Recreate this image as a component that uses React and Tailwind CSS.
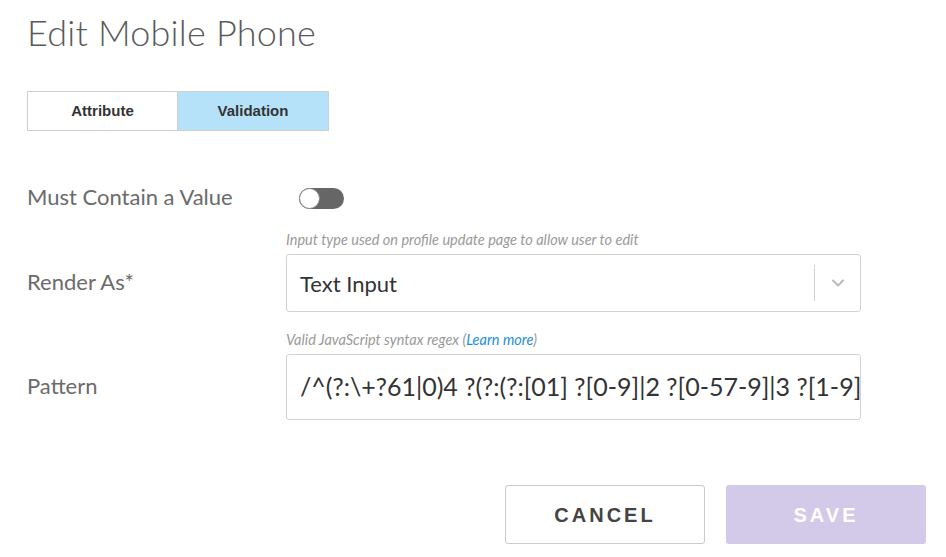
import { ChevronDown } from 'lucide-react';

export default function App() {
  return (
    <div className="w-[946px] h-[557px] bg-white pl-[27px] pt-[10px] font-['Lato',sans-serif] text-[#555]">
      <h1 className="text-[36px] font-light leading-[44px] text-[#5a5a5a] tracking-[0.2px]">Edit Mobile Phone</h1>

      <div className="mt-[37px] flex w-[302px] h-[40px] border border-[#cfcfcf] font-['Liberation_Sans',Arial,sans-serif] font-bold text-[15px] text-[#333]">
        <button className="w-[150px] h-full bg-white border-r border-[#cfcfcf]">Attribute</button>
        <button className="flex-1 h-full bg-[#b5e1f9]">Validation</button>
      </div>

      <div className="mt-[53px] flex items-center h-[24px]">
        <div className="w-[272px] text-[22px] text-[#6b6b6b]">Must Contain a Value</div>
        <div className="relative w-[45px] h-[21px] mt-[4px] rounded-full bg-[#666]">
          <div className="absolute left-0 top-0 w-[21px] h-[21px] rounded-full bg-white border border-[#888]"></div>
        </div>
      </div>

      <div className="mt-[23px] flex">
        <div className="w-[259px] shrink-0 flex items-end pb-[14px] text-[22px] text-[#6b6b6b]">Render As*</div>
        <div className="w-[575px]">
          <div className="text-[14.5px] italic text-[#9a9a9a] leading-[18px] mb-[5px]">
            Input type used on profile update page to allow user to edit
          </div>
          <div className="flex items-center h-[58px] border border-[#d2d2d2] rounded-[3px]">
            <div className="flex-1 pl-[13px] text-[22px] text-[#333]">Text Input</div>
            <div className="w-px h-[36px] bg-[#d2d2d2]"></div>
            <div className="w-[45px] flex justify-center text-[#bbb]">
              <ChevronDown size={20} strokeWidth={2.5} />
            </div>
          </div>
        </div>
      </div>

      <div className="mt-[19px] flex">
        <div className="w-[259px] shrink-0 flex items-end pb-[18px] text-[22px] text-[#6b6b6b]">Pattern</div>
        <div className="w-[575px]">
          <div className="text-[14.5px] italic text-[#9a9a9a] leading-[18px] mb-[5px]">
            Valid JavaScript syntax regex (<span className="text-[#1e8fd6]">Learn more</span>)
          </div>
          <div className="flex items-center h-[66px] border border-[#d2d2d2] rounded-[3px] overflow-hidden">
            <div className="w-full pl-[13px] pr-[10px] text-[25px] text-[#333] whitespace-nowrap overflow-hidden">
              /^(?:\+?61|0)4 ?(?:(?:[01] ?[0-9]|2 ?[0-57-9]|3 ?[1-9]|4 ?[7-9]|5 ?[018]) ?[0-9]|3 ?0 ?[0-5])(?: ?[0-9]){5}$/
            </div>
          </div>
        </div>
      </div>

      <div className="mt-[65px] flex justify-end gap-[21px] pr-[20px] font-['Liberation_Sans',Arial,sans-serif] font-bold text-[20px] tracking-[3px]">
        <button className="w-[200px] h-[59px] border border-[#cacaca] rounded-[3px] bg-white text-[#444]">CANCEL</button>
        <button className="w-[200px] h-[59px] rounded-[3px] bg-[#d3c9e8] text-white">SAVE</button>
      </div>
    </div>
  );
}
